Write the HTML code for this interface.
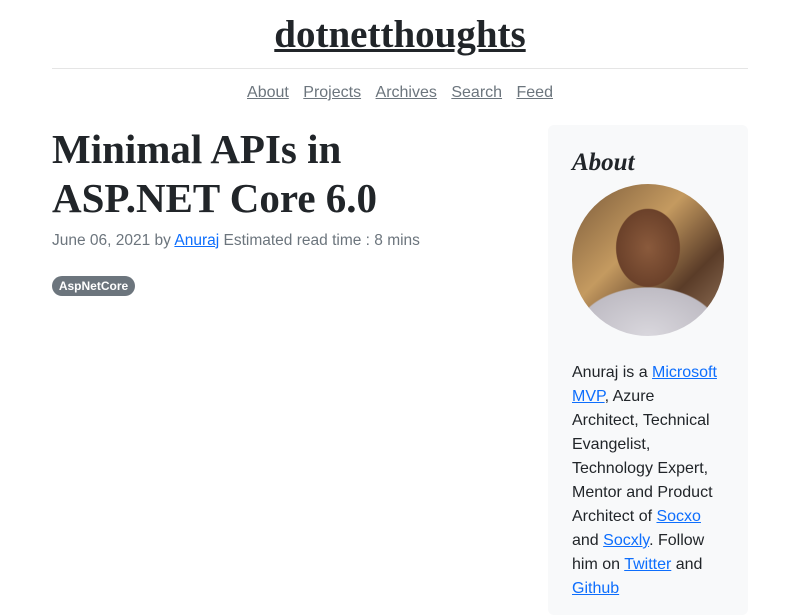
<!DOCTYPE html>
<html><head><meta charset="utf-8"><style>
body{margin:0;background:#fff;font-family:"Liberation Sans",sans-serif;color:#212529;}
.t{position:absolute;left:0;width:800px;text-align:center;top:11px;font:bold 39px/48px "Liberation Serif",serif;}
.t a{color:#212529;text-decoration:underline;text-decoration-thickness:3px;}
.hr{position:absolute;left:52px;width:696px;top:68px;height:1px;background:#e5e5e5}
.nav{position:absolute;top:82px;left:0;width:800px;text-align:center;font-size:16px;line-height:22px;word-spacing:0}
.nav a{color:#6c757d;text-decoration:underline;margin:0 5px}
h1{position:absolute;left:52px;top:125px;margin:0;font:bold 41px/49px "Liberation Serif",serif;color:#212529;width:440px}
.meta{position:absolute;left:52px;top:230px;font-size:15.5px;color:#6c757d;line-height:22px}
.meta a{color:#0d6efd}
.badge{position:absolute;left:52px;top:276px;width:83px;height:20px;border-radius:10px;background:#6c757d;color:#fff;font:bold 12px/20px "Liberation Sans",sans-serif;text-align:center}
.side{position:absolute;left:548px;top:125px;width:200px;height:490px;background:#f8f9fa;border-radius:6px}
.side h4{position:absolute;left:24px;top:22px;margin:0;font:italic bold 25px/32px "Liberation Serif",serif}
.ph{position:absolute;left:24px;top:59px;width:152px;height:152px;border-radius:50%;overflow:hidden;background:radial-gradient(ellipse 45px 55px at 50% 42%,#8a5a3c 0,#6b412a 70%,transparent 72%),radial-gradient(ellipse 90px 60px at 50% 100%,#d9d7dd 0,#bfbcc4 80%,transparent 82%),linear-gradient(135deg,#7a5a3a,#c49a60 40%,#5a3c28 70%,#9a7a60)}
.txt{position:absolute;left:24px;top:236px;width:150px;font-size:16px;line-height:24px;color:#212529}
.txt a{color:#0d6efd}
</style></head><body>
<div class="t"><a>dotnetthoughts</a></div>
<div class="hr"></div>
<div class="nav"><a>About</a> <a>Projects</a> <a>Archives</a> <a>Search</a> <a>Feed</a></div>
<h1>Minimal APIs in ASP.NET Core 6.0</h1>
<div class="meta">June 06, 2021 by <a href="#">Anuraj</a> Estimated read time : 8 mins</div>
<div class="badge">AspNetCore</div>
<div class="side"><h4>About</h4><div class="ph"></div>
<div class="txt">Anuraj is a <a href="#">Microsoft MVP</a>, Azure Architect, Technical Evangelist, Technology Expert, Mentor and Product Architect of <a href="#">Socxo</a> and <a href="#">Socxly</a>. Follow him on <a href="#">Twitter</a> and <a href="#">Github</a></div></div>
</body></html>
